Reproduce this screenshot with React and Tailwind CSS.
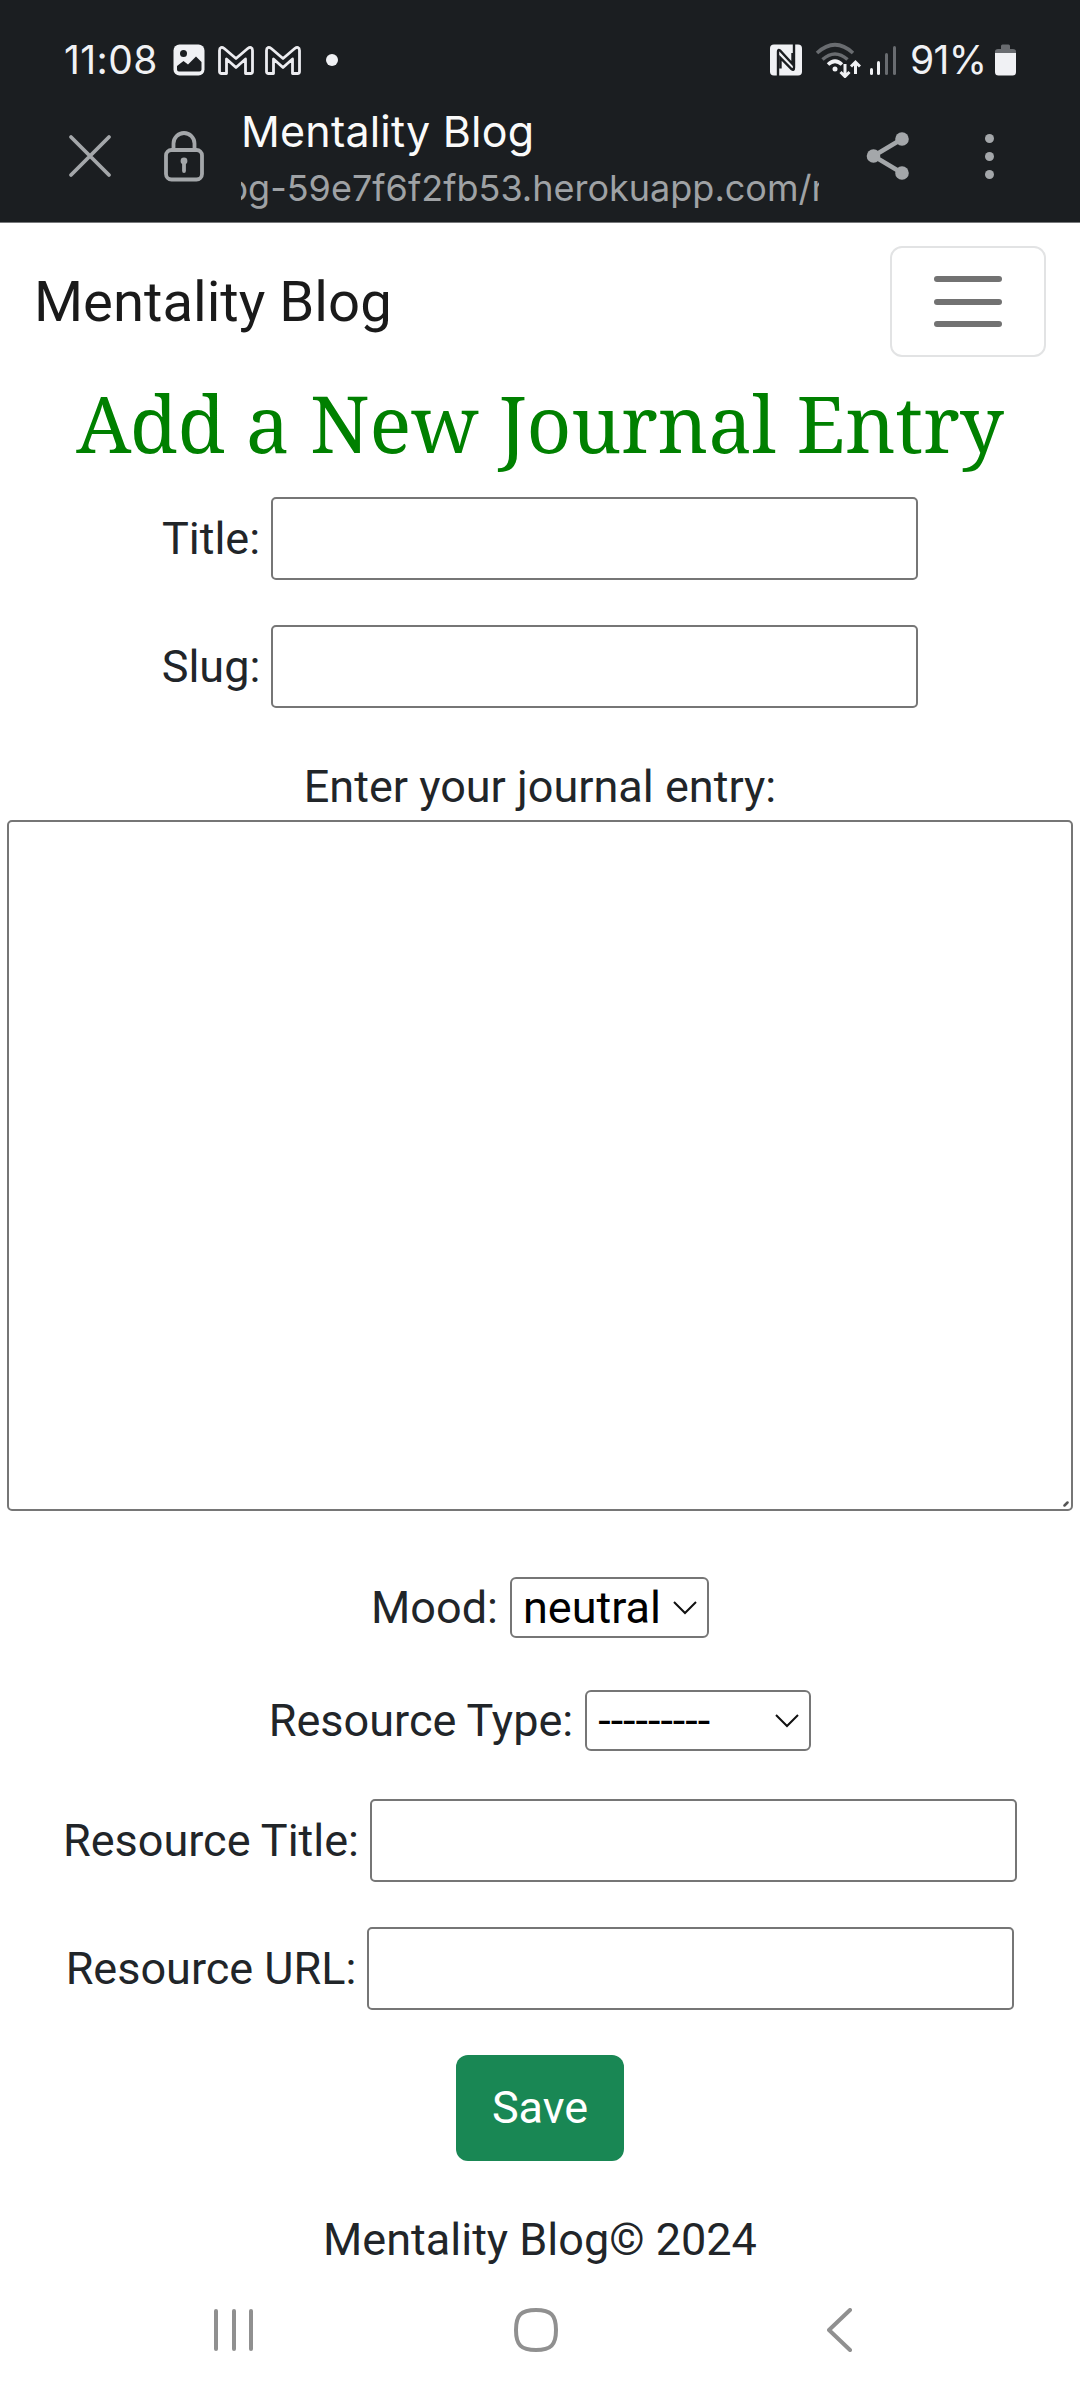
import React from "react";

function GmailIcon() {
  return (
    <svg className="h-[29px] w-[36px]" viewBox="0 0 36 29" fill="none" stroke="#ececf0" strokeWidth="2.8" strokeLinejoin="round">
      <path d="M1.5 25.5V4.5C1.5 1.2 4 .8 6 2.3L18 12.5L30 2.3C32 .8 34.5 1.2 34.5 4.5V25.5Q34.5 27.5 32.5 27.5H27.5V13L18 21.5L8.5 13V27.5H3.5Q1.5 27.5 1.5 25.5Z" />
    </svg>
  );
}

function StatusBar() {
  return (
    <div className="flex h-[120px] items-center justify-between pr-[64px] pl-[64px] text-[#f0f1f4]">
      <div className="flex h-10 items-center">
        <span className="w-[92px] text-[39px] leading-10 tracking-[0.4px] whitespace-nowrap">11:08</span>
        <svg className="ml-[17px] h-[32px] w-[32px]" viewBox="0 0 32 32">
          <rect x="0.5" y="0.5" width="31" height="31" rx="6" fill="#f0f1f4" />
          <circle cx="10.5" cy="9.5" r="3.5" fill="#1b1e21" />
          <path d="M4 22L10.5 17L15 20.5L23 12.5L28.5 18V25.5Q28.5 27.5 26.5 27.5H6Q4 27.5 4 25.5Z" fill="#1b1e21" />
        </svg>
        <div className="ml-[13px] flex gap-[11px]">
          <GmailIcon />
          <GmailIcon />
        </div>
        <span className="ml-[25px] size-[12px] rounded-full bg-[#f0f1f4]" />
      </div>
      <div className="flex h-10 items-center">
        <svg className="h-[32px] w-[32px]" viewBox="0 0 32 32">
          <rect x="0" y="0.5" width="32" height="31" rx="4" fill="#f0f1f4" />
          <path d="M8 32V7.5Q8 5 10 6.5L22.5 20V9M24 0V23.5Q24 27 21.5 25L10.5 14V24.5" fill="none" stroke="#1b1e21" strokeWidth="2.4" />
        </svg>
        <svg className="ml-[13px] h-[36px] w-[46px]" viewBox="0 0 46 36" fill="none" strokeLinecap="butt">
          <path d="M2 11Q20 -5.500 38 11" stroke="#696c70" strokeWidth="3.6" />
          <path d="M7.500 17.500Q20 6.500 32.500 17.500" stroke="#696c70" strokeWidth="3.6" />
          <path d="M13 22.500Q20 16 27 22.500" stroke="#f0f1f4" strokeWidth="3.6" />
          <circle cx="20" cy="27" r="2.500" fill="#f0f1f4" />
          <path d="M30 22V34M25.500 30L30 34.500L34.500 30M40.500 32V20M36 24.500L40.500 20L45 24.500" stroke="#f0f1f4" strokeWidth="3" />
        </svg>
        <div className="ml-[9px] flex h-[30px] items-end gap-[4.500px]">
          <span className="h-[7px] w-[3px] rounded-sm bg-[#f0f1f4]" />
          <span className="h-[14px] w-[3px] rounded-sm bg-[#f0f1f4]" />
          <span className="h-[22px] w-[3.500px] rounded-sm bg-[#696c70]" />
          <span className="h-[29px] w-[3.500px] rounded-sm bg-[#696c70]" />
        </div>
        <span className="ml-[14px] w-[78px] text-[39px] leading-10 tracking-[-0.600px] whitespace-nowrap">91%</span>
        <svg className="ml-[7px] h-[32px] w-[21px]" viewBox="0 0 21 32">
          <path d="M0 9V7.500Q0 5 3 5H6V2Q6 0.500 7.500 0.500H13.500Q15 0.500 15 2V5H18Q21 5 21 7.500V9Z" fill="#696c70" />
          <path d="M0 9H21V28Q21 31.500 17.500 31.500H3.500Q0 31.500 0 28Z" fill="#f0f1f4" />
        </svg>
      </div>
    </div>
  );
}

function BrowserBar() {
  return (
    <div className="flex h-[102px] items-start">
      <svg className="mt-[14px] ml-[68px] size-[46px]" viewBox="0 0 46 46" stroke="#a4a7aa" strokeWidth="3.800" strokeLinecap="round">
        <path d="M3 3L41 41M41 3L3 41" />
      </svg>
      <svg className="mt-[10px] ml-[50px] h-[52px] w-[40px]" viewBox="0 0 40 52" fill="none" stroke="#a4a7aa" strokeWidth="3.800">
        <rect x="2" y="20" width="36" height="29.500" rx="5.500" />
        <path d="M9.500 20V13.500A10.500 10.500 0 0 1 30.500 13.500V20" />
        <path d="M20 31V41" strokeLinecap="round" />
        <circle cx="20" cy="31" r="1.500" />
      </svg>
      <div className="mt-[-14px] ml-[37px] flex w-[578px] flex-col whitespace-nowrap">
        <div className="h-[52px] text-[43px] leading-[50px] tracking-[0.200px] text-[#fafafa]">Mentality Blog</div>
        <div className="mt-[8px] flex h-[48px] justify-end overflow-hidden text-[36px] leading-[44px] text-[#9fa2a5]">
          <span className="mr-[-6px]">og-59e7f6f2fb53.herokuapp.com/r</span>
        </div>
      </div>
      <svg className="mt-[12px] ml-[47px] h-[48px] w-[44px]" viewBox="0 0 44 48" fill="#a4a7aa">
        <path d="M36 7L7.500 24L36 41" fill="none" stroke="#a4a7aa" strokeWidth="4.500" />
        <circle cx="36" cy="7" r="6.800" />
        <circle cx="7.500" cy="24" r="6.800" />
        <circle cx="36" cy="41" r="6.800" />
      </svg>
      <div className="mt-[13.500px] ml-[75px] flex flex-col gap-[9px]">
        <span className="size-[9px] rounded-full bg-[#a4a7aa]" />
        <span className="size-[9px] rounded-full bg-[#a4a7aa]" />
        <span className="size-[9px] rounded-full bg-[#a4a7aa]" />
      </div>
    </div>
  );
}

function TextField({ label, name }) {
  return (
    <div className="flex h-[83px] items-center justify-center gap-[11px]">
      <label htmlFor={name}>{label}</label>
      <input id={name} className="h-[83px] w-[647px] rounded-[5px] border-2 border-[#767676] bg-white px-2 outline-none" />
    </div>
  );
}

function SelectField({ label, name, value, width }) {
  return (
    <div className="flex h-[61px] items-center justify-center gap-[12px]">
      <label htmlFor={name}>{label}</label>
      <div id={name} className={`flex h-[61px] items-center justify-between rounded-[6px] border-2 border-[#767676] pr-[10px] pl-[11px] text-black ${width}`}>
        <span>{value}</span>
        <svg className="h-[14px] w-[24px]" viewBox="0 0 24 14" fill="none" stroke="#111" strokeWidth="2">
          <path d="M1 1L12 12L23 1" />
        </svg>
      </div>
    </div>
  );
}

export default function App() {
  return (
    <div className="flex h-[2400px] w-[1080px] flex-col overflow-hidden bg-white font-['Roboto',sans-serif] text-[45px] leading-[68px] text-[#212529]">
      <header className="h-[223px] border-b border-[#77797b] bg-[#1b1e21] font-['Inter',sans-serif]">
        <StatusBar />
        <BrowserBar />
      </header>

      <nav className="flex h-[156px] items-center justify-between pt-px pr-[34px] pl-[34px]">
        <span className="text-[56.250px] text-[#1a1a1a]">Mentality Blog</span>
        <button className="flex h-[111px] w-[156px] flex-col items-center justify-center gap-[16.500px] rounded-[12px] border-2 border-[#e2e3e4]">
          <span className="h-[6px] w-[68px] rounded-full bg-[#727272]" />
          <span className="h-[6px] w-[68px] rounded-full bg-[#727272]" />
          <span className="h-[6px] w-[68px] rounded-full bg-[#727272]" />
        </button>
      </nav>

      <main className="flex flex-col">
        <h1 className="h-[118px] text-center font-['Noto_Serif','DejaVu_Serif_Condensed',serif] text-[78px] leading-[88px] whitespace-nowrap text-[#008000]">
          Add a New Journal Entry
        </h1>
        <div className="flex flex-col gap-[45px]">
          <TextField label="Title:" name="title" />
          <TextField label="Slug:" name="slug" />
        </div>
        <label htmlFor="entry" className="mt-[45px] h-[67px] text-center">Enter your journal entry:</label>
        <div className="relative mx-[7px] h-[691px]">
          <textarea id="entry" className="block h-full w-full resize-none rounded-[5px] border-2 border-[#767676] outline-none" />
          <svg className="absolute right-[4px] bottom-[4px] size-[6px]" viewBox="0 0 6 6" stroke="#555" strokeWidth="2.500" strokeLinecap="round">
            <path d="M1.500 4.500L4.500 1.500" />
          </svg>
        </div>
        <div className="mt-[66px] flex flex-col gap-[52px]">
          <SelectField label="Mood:" name="mood" value="neutral" width="w-[199px]" />
          <SelectField label="Resource Type:" name="type" value="---------" width="w-[226px]" />
        </div>
        <div className="mt-[48px] flex flex-col gap-[45px]">
          <TextField label="Resource Title:" name="resource-title" />
          <TextField label="Resource URL:" name="resource-url" />
        </div>
        <button className="mt-[45px] h-[106px] w-[168px] self-center rounded-[12px] bg-[#198754] text-white">Save</button>
      </main>

      <footer className="mt-[45px] text-center">Mentality Blog© 2024</footer>

      <div className="mt-[34px] flex h-[44px] items-center">
        <div className="ml-[214px] flex gap-[13.500px]">
          <span className="h-[42px] w-[4px] rounded-full bg-[#909090]" />
          <span className="h-[42px] w-[4px] rounded-full bg-[#909090]" />
          <span className="h-[42px] w-[4px] rounded-full bg-[#909090]" />
        </div>
        <svg className="ml-[261px] size-[44px]" viewBox="0 0 44 44" fill="none" stroke="#909090" strokeWidth="4">
          <path d="M22 2C37 2 42 7 42 22C42 37 37 42 22 42C7 42 2 37 2 22C2 7 7 2 22 2Z" />
        </svg>
        <svg className="ml-[269px] h-[44px] w-[26px]" viewBox="0 0 26 44" fill="none" stroke="#909090" strokeWidth="4" strokeLinecap="round" strokeLinejoin="round">
          <path d="M23 2L2 22L23 42" />
        </svg>
      </div>
    </div>
  );
}
